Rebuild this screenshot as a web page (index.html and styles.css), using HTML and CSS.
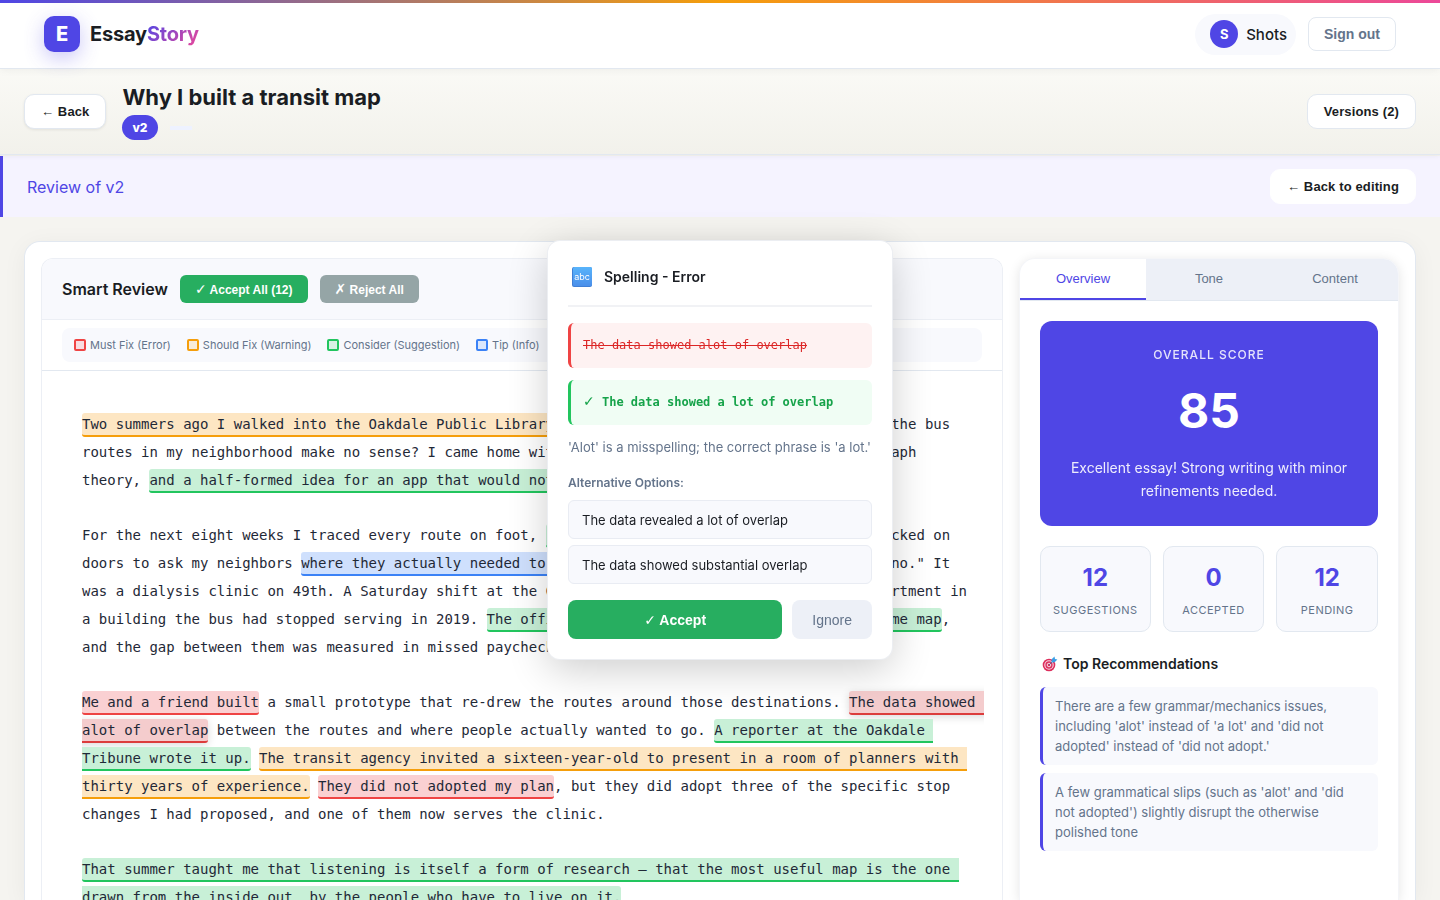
FILE: index.html
```html
<!DOCTYPE html>
<html lang="en">
<head>
  <meta charset="UTF-8" />
  <meta name="viewport" content="width=device-width, initial-scale=1.0" />
  <title>EssayStory — Why I built a transit map</title>
  <link rel="stylesheet" href="styles.css">
</head>
<body>
  <header class="site-header">
    <div class="header-inner">
      <a href="#" class="brand">
        <span class="brand-mark">E</span>
        <span class="brand-name">Essay<span class="brand-accent">Story</span></span>
      </a>
      <div class="account">
        <div class="user-pill">
          <span class="avatar">S</span>
          <span class="user-name">Shots</span>
        </div>
        <button type="button" class="btn-signout">Sign out</button>
      </div>
    </div>
  </header>

  <div class="essay-bar">
    <button type="button" class="btn btn-raised">← Back</button>
    <div class="essay-heading">
      <h1 class="essay-title">Why I built a transit map</h1>
      <div class="essay-meta">
        <span class="version-badge">v2</span>
        <span class="status-badge"></span>
      </div>
    </div>
    <button type="button" class="btn">Versions (2)</button>
  </div>

  <div class="review-banner">
    <span class="review-label">Review of v2</span>
    <button type="button" class="btn btn-plain">← Back to editing</button>
  </div>

  <main class="workspace">
    <section class="editor">
      <div class="editor-head">
        <h2 class="editor-title">Smart Review</h2>
        <button type="button" class="btn-bulk accept"><span class="glyph">✓</span> Accept All (12)</button>
        <button type="button" class="btn-bulk reject"><span class="glyph">✗</span> Reject All</button>
      </div>
      <div class="legend-wrap">
        <ul class="legend">
          <li><span class="swatch error"></span>Must Fix (Error)</li>
          <li><span class="swatch warning"></span>Should Fix (Warning)</li>
          <li><span class="swatch suggestion"></span>Consider (Suggestion)</li>
          <li><span class="swatch info"></span>Tip (Info)</li>
        </ul>
      </div>
      <article class="essay">
        <p><mark class="warning">Two summers ago I walked into the Oakdale Public Library</mark> with one small question for me: Why do the bus routes in my neighborhood make no sense? I came home with a pile of schedules, a journal, one graph theory, <mark class="suggestion">and a half-formed idea for an app that would not quite work yet.</mark></p>
        <p>For the next eight weeks I traced every route on foot, <mark class="suggestion">recording each stop by hand</mark>, and so I knocked on doors to ask my neighbors <mark class="info">where they actually needed to go</mark>, and one man told me, "Not downtown, no." It was a dialysis clinic on 49th. A Saturday shift at the Costco off Route 12. My grandmother's apartment in a building the bus had stopped serving in 2019. <mark class="suggestion">The official map and my own one was never the same map</mark>, and the gap between them was measured in missed paychecks.</p>
        <p><mark class="error">Me and a friend built</mark> a small prototype that re-drew the routes around those destinations. <mark class="error active">The data showed alot of overlap</mark> between the routes and where people actually wanted to go. <mark class="suggestion">A reporter at the Oakdale Tribune wrote it up.</mark> <mark class="warning">The transit agency invited a sixteen-year-old to present in a room of planners with thirty years of experience.</mark> <mark class="error">They did not adopted my plan</mark>, but they did adopt three of the specific stop changes I had proposed, and one of them now serves the clinic.</p>
        <p><mark class="suggestion">That summer taught me that listening is itself a form of research — that the most useful map is the one drawn from the inside out, by the people who have to live on it.</mark></p>
      </article>
    </section>

    <aside class="sidebar">
      <div class="tabs" role="tablist">
        <button type="button" class="tab active" role="tab" aria-selected="true">Overview</button>
        <button type="button" class="tab" role="tab" aria-selected="false">Tone</button>
        <button type="button" class="tab" role="tab" aria-selected="false">Content</button>
      </div>
      <div class="sidebar-body">
        <div class="score-card">
          <div class="score-label">Overall Score</div>
          <div class="score-value">85</div>
          <p class="score-text">Excellent essay! Strong writing with minor refinements needed.</p>
        </div>
        <div class="stats">
          <div class="stat"><div class="stat-value">12</div><div class="stat-label">Suggestions</div></div>
          <div class="stat"><div class="stat-value">0</div><div class="stat-label">Accepted</div></div>
          <div class="stat"><div class="stat-value">12</div><div class="stat-label">Pending</div></div>
        </div>
        <h3 class="rec-title">
          <svg class="target-icon" viewBox="0 0 16 16" aria-hidden="true">
            <circle cx="7" cy="9" r="6.3" fill="#dd2e5c"/>
            <circle cx="7" cy="9" r="4.2" fill="none" stroke="#f6dbe8" stroke-width="1.1"/>
            <circle cx="7" cy="9" r="1.8" fill="none" stroke="#f6dbe8" stroke-width="1"/>
            <path d="M7 9 11.5 4.5" stroke="#5b6a8c" stroke-width="1"/>
            <path d="M9.5 6.5 9.7 3.3 12.5.6 13 3 15.4 3.5 12.7 6.3Z" fill="#3b9fe5"/>
          </svg>
          Top Recommendations
        </h3>
        <ul class="recs">
          <li>There are a few grammar/mechanics issues, including 'alot' instead of 'a lot' and 'did not adopted' instead of 'did not adopt.'</li>
          <li>A few grammatical slips (such as 'alot' and 'did not adopted') slightly disrupt the otherwise polished tone</li>
        </ul>
      </div>
    </aside>
  </main>

  <div class="popup" role="dialog" aria-labelledby="popup-title">
    <div class="popup-head">
      <svg class="abc-icon" viewBox="0 0 20 20" aria-hidden="true">
        <defs>
          <linearGradient id="abc-fill" x1="0" y1="0" x2="0" y2="1">
            <stop offset="0" stop-color="#58b4fb"/>
            <stop offset="1" stop-color="#4a8fea"/>
          </linearGradient>
        </defs>
        <rect width="20" height="20" rx="2" fill="#3f7fd6"/>
        <rect x="1" width="19" height="19" rx="1.5" fill="url(#abc-fill)"/>
        <text x="10" y="13" text-anchor="middle" class="abc-text">abc</text>
      </svg>
      <h2 id="popup-title" class="popup-title">Spelling - Error</h2>
    </div>
    <div class="diff diff-old">The data showed alot of overlap</div>
    <div class="diff diff-new"><span class="glyph">✓</span> The data showed a lot of overlap</div>
    <p class="popup-reason">'Alot' is a misspelling; the correct phrase is 'a lot.'</p>
    <div class="alt-title">Alternative Options:</div>
    <div class="alts">
      <button type="button" class="alt">The data revealed a lot of overlap</button>
      <button type="button" class="alt">The data showed substantial overlap</button>
    </div>
    <div class="popup-actions">
      <button type="button" class="btn-accept"><span class="glyph">✓</span> Accept</button>
      <button type="button" class="btn-ignore">Ignore</button>
    </div>
  </div>
</body>
</html>
```
FILE: styles.css
```css
* {
  box-sizing: border-box;
}

:root {
  --primary: #4f46e5;
  --ink: #1a1d23;
  --muted: #64748b;
  --line: #e2e8f0;
  --soft: #f8f9fd;
  --error: #ef4444;
  --warning: #f59e0b;
  --suggestion: #22c55e;
  --info: #3b82f6;
  --mono: "DejaVu Sans Mono", monospace;
}

html, body {
  margin: 0;
  height: 100%;
  overflow: hidden;
}

body {
  font-family: Inter, sans-serif;
  color: var(--ink);
  background: #f5f4f0;
  display: flex;
  flex-direction: column;
}

button {
  font-family: "Liberation Sans", Arial, sans-serif;
  cursor: pointer;
}

h1, h2, h3, p, ul {
  margin: 0;
  padding: 0;
}

ul {
  list-style: none;
}

.glyph {
  font-family: "DejaVu Sans", sans-serif;
  font-size: 14px;
  line-height: 1;
}

/* Header */
.site-header {
  position: relative;
  z-index: 2;
  flex: none;
  background: #fff;
  border-bottom: 1px solid var(--line);
  box-shadow: 0 1px 8px rgba(0, 0, 0, 0.06);
}

.site-header::before {
  content: "";
  display: block;
  height: 3px;
  background: linear-gradient(90deg, #4f46e5, #f59e0b, #ec4899);
}

.header-inner {
  max-width: 1400px;
  height: 65px;
  margin: 0 auto;
  padding: 0 24px 3px;
  display: flex;
  align-items: center;
  justify-content: space-between;
}

.brand {
  display: flex;
  align-items: center;
  gap: 10px;
  color: var(--ink);
  text-decoration: none;
}

.brand-mark {
  width: 36px;
  height: 36px;
  border-radius: 10px;
  background: var(--primary);
  color: #fff;
  font-size: 20px;
  font-weight: 800;
  display: flex;
  align-items: center;
  justify-content: center;
  box-shadow: 0 6px 20px rgba(79, 70, 229, 0.3);
}

.brand-name {
  font-size: 20px;
  font-weight: 700;
  letter-spacing: -0.01em;
}

.brand-accent {
  background: linear-gradient(135deg, #4f46e5, #ec4899);
  -webkit-background-clip: text;
  background-clip: text;
  color: transparent;
}

.account {
  display: flex;
  align-items: center;
  gap: 12px;
}

.user-pill {
  display: flex;
  align-items: center;
  gap: 8px;
  height: 41px;
  padding: 0 9px 0 15px;
  border-radius: 21px;
  background: var(--soft);
  font-size: 15px;
  font-weight: 500;
}

.avatar {
  width: 28px;
  height: 28px;
  border-radius: 50%;
  background: var(--primary);
  color: #fff;
  font-size: 13px;
  font-weight: 700;
  display: flex;
  align-items: center;
  justify-content: center;
}

.btn-signout {
  height: 34px;
  padding: 0 15px;
  border: 1px solid var(--line);
  border-radius: 8px;
  background: #fff;
  color: var(--muted);
  font-size: 14px;
  font-weight: 600;
}

/* Essay bar */
.essay-bar {
  position: relative;
  z-index: 1;
  flex: none;
  display: flex;
  align-items: center;
  gap: 16px;
  height: 86px;
  padding: 0 24px;
  background: linear-gradient(#fafaf6, #f2f1eb);
  border-bottom: 1px solid var(--line);
  box-shadow: 0 1px 6px rgba(0, 0, 0, 0.05);
}

.btn {
  height: 35px;
  padding: 0 16px;
  border: 1px solid var(--line);
  border-radius: 10px;
  background: #fff;
  color: var(--ink);
  font-size: 13px;
  font-weight: 600;
  letter-spacing: 0.01em;
}

.btn-raised {
  box-shadow: 0 1px 3px rgba(0, 0, 0, 0.08);
}

.btn-plain {
  border-color: #fff;
}

.essay-heading {
  flex: 1;
}

.essay-title {
  margin-bottom: 4px;
  font-size: 22px;
  line-height: 28px;
  font-weight: 700;
}

.essay-meta {
  display: flex;
  align-items: center;
  gap: 12px;
}

.version-badge {
  padding: 0 10px;
  border-radius: 13px;
  background: var(--primary);
  color: #fff;
  font-size: 12px;
  line-height: 25px;
  font-weight: 800;
}

.status-badge {
  width: 22px;
  height: 4px;
  background: #eef2ff;
}

/* Review banner */
.review-banner {
  flex: none;
  display: flex;
  align-items: center;
  justify-content: space-between;
  height: 61px;
  margin-top: 1px;
  padding: 0 24px;
  border-left: 3px solid var(--primary);
  background: #f5f3ff;
}

.review-label {
  color: var(--primary);
  font-size: 16px;
}

/* Workspace */
.workspace {
  flex: 1;
  display: grid;
  grid-template-columns: minmax(0, 1fr) 380px;
  gap: 16px;
  margin: 24px 24px 0;
  padding: 16px 16px 0;
  border: 1px solid var(--line);
  border-bottom: 0;
  border-radius: 16px 16px 0 0;
  background: #fff;
  box-shadow: 0 4px 24px rgba(0, 0, 0, 0.05);
  min-height: 0;
}

.editor {
  border: 1px solid #eceff5;
  border-bottom: 0;
  border-radius: 12px 12px 0 0;
  overflow: hidden;
}

.editor-head {
  display: flex;
  align-items: center;
  gap: 12px;
  height: 61px;
  padding: 0 20px;
  background: var(--soft);
  border-bottom: 1px solid #eceff5;
}

.editor-title {
  font-size: 16px;
  font-weight: 600;
}

.btn-bulk {
  height: 28px;
  padding: 0 15px;
  border: 0;
  border-radius: 6px;
  color: #fff;
  font-size: 12px;
  font-weight: 600;
}

.btn-bulk.accept {
  background: #27ae60;
}

.btn-bulk.reject {
  background: #95a5a6;
}

.legend-wrap {
  padding: 8px 20px;
  border-bottom: 1px solid var(--line);
}

.legend {
  display: flex;
  align-items: center;
  gap: 16px;
  height: 34px;
  padding: 0 12px;
  border-radius: 8px;
  background: var(--soft);
  color: var(--muted);
  font-size: 11px;
}

.legend li {
  display: flex;
  align-items: center;
  gap: 4px;
}

.swatch {
  width: 12px;
  height: 12px;
  border: 2px solid;
  border-radius: 2px;
}

.swatch.error { border-color: var(--error); background: #f8dce1; }
.swatch.warning { border-color: var(--warning); background: #f8ecd9; }
.swatch.suggestion { border-color: var(--suggestion); background: #d8f1e4; }
.swatch.info { border-color: var(--info); background: #dbe7fc; }

.essay {
  padding: 39px 24px 40px 40px;
  color: #1f2937;
  font-family: var(--mono);
  font-size: 14px;
  line-height: 28px;
  white-space: pre-wrap;
  display: flex;
  flex-direction: column;
  gap: 27px;
}

mark {
  padding: 3px 0;
  border-bottom: 2px solid;
  border-radius: 3px;
  color: inherit;
}

mark.error { background: #fad0d2; border-color: var(--error); }
mark.warning { background: #fde6c3; border-color: var(--warning); }
mark.suggestion { background: #c8f0d7; border-color: var(--suggestion); }
mark.info { background: #cfe0fd; border-color: var(--info); }

mark.active {
  background: #f4cccd;
  border-color: #dc3c3c;
  box-shadow: 0 2px 8px rgba(0, 0, 0, 0.15);
}

/* Sidebar */
.sidebar {
  border: 1px solid #f4f5f8;
  border-bottom: 0;
  border-radius: 16px 16px 0 0;
  background: #fff;
  box-shadow: 0 2px 12px rgba(0, 0, 0, 0.1);
  overflow: hidden;
}

.tabs {
  display: grid;
  grid-template-columns: repeat(3, 1fr);
  background: #edf0f7;
  border-bottom: 1px solid var(--line);
}

.tab {
  height: 41px;
  padding: 0;
  border: 0;
  border-bottom: 2px solid transparent;
  background: none;
  color: var(--muted);
  font-size: 13px;
}

.tab.active {
  background: #fff;
  border-color: var(--primary);
  color: var(--primary);
}

.sidebar-body {
  padding: 20px;
}

.score-card {
  padding: 24px;
  border-radius: 12px;
  background: var(--primary);
  color: #fff;
  text-align: center;
}

.score-label {
  font-size: 12px;
  line-height: 20px;
  font-weight: 500;
  letter-spacing: 1px;
  text-transform: uppercase;
  opacity: 0.85;
}

.score-value {
  margin: 12px 0;
  font-size: 48px;
  line-height: 67px;
  font-weight: 700;
}

.score-text {
  font-size: 14px;
  line-height: 23px;
  opacity: 0.9;
}

.stats {
  display: grid;
  grid-template-columns: repeat(3, 1fr);
  gap: 12px;
  margin: 20px 0;
}

.stat {
  padding: 12px;
  border: 1px solid var(--line);
  border-radius: 10px;
  background: var(--soft);
  text-align: center;
}

.stat-value {
  color: var(--primary);
  font-size: 24px;
  line-height: 38px;
  font-weight: 700;
}

.stat-label {
  margin-top: 4px;
  color: var(--muted);
  font-size: 11px;
  line-height: 18px;
  letter-spacing: 0.5px;
  text-transform: uppercase;
}

.rec-title {
  display: flex;
  align-items: center;
  gap: 5px;
  margin-bottom: 12px;
  padding-left: 2px;
  font-size: 14px;
  line-height: 23px;
  font-weight: 600;
}

.target-icon {
  width: 16px;
  height: 16px;
}

.recs li {
  margin-bottom: 8px;
  padding: 9px 12px;
  border-left: 3px solid var(--primary);
  border-radius: 6px;
  background: var(--soft);
  color: var(--muted);
  font-size: 13px;
  line-height: 20px;
}

/* Suggestion popup */
.popup {
  position: fixed;
  z-index: 10;
  top: 50%;
  left: 50%;
  transform: translate(-50%, -50%);
  width: 344px;
  padding: 20px;
  border-radius: 12px;
  background: #fff;
  box-shadow: 0 0 0 1px #eceef2, 0 10px 40px rgba(0, 0, 0, 0.2);
}

.popup-head {
  display: flex;
  align-items: center;
  gap: 12px;
  margin-bottom: 16px;
  padding: 0 4px 12px;
  border-bottom: 2px solid #f1f2f5;
}

.abc-icon {
  width: 20px;
  height: 20px;
}

.abc-text {
  font-size: 9px;
  fill: #fff;
}

.popup-title {
  font-size: 14px;
  line-height: 32px;
  font-weight: 600;
}

.diff {
  margin-bottom: 12px;
  padding: 12px;
  border-left: 3px solid;
  border-radius: 6px;
  font-family: var(--mono);
  font-size: 12px;
  line-height: 21px;
}

.diff-old {
  border-color: var(--error);
  background: #fef2f2;
  color: #dc2626;
  text-decoration: line-through;
}

.diff-new {
  border-color: var(--suggestion);
  background: #f0fdf4;
  color: #16a34a;
  font-weight: 700;
}

.popup-reason {
  color: var(--muted);
  font-size: 13px;
  line-height: 21px;
  white-space: nowrap;
}

.alt-title {
  margin: 16px 0 8px;
  color: var(--muted);
  font-size: 12px;
  line-height: 18px;
  font-weight: 600;
}

.alts {
  display: flex;
  flex-direction: column;
  gap: 6px;
}

.alt {
  height: 39px;
  padding: 0 13px;
  border: 1px solid #e9ecf3;
  border-radius: 6px;
  background: var(--soft);
  color: var(--ink);
  font-family: inherit;
  font-size: 13px;
  text-align: left;
}

.popup-actions {
  display: flex;
  gap: 10px;
  margin-top: 16px;
}

.btn-accept,
.btn-ignore {
  height: 39px;
  border: 0;
  border-radius: 8px;
  font-size: 14px;
}

.btn-accept {
  flex: 1;
  background: #27ae60;
  color: #fff;
  font-weight: 600;
}

.btn-ignore {
  padding: 0 20px;
  background: #edf0f7;
  color: var(--muted);
}
```
